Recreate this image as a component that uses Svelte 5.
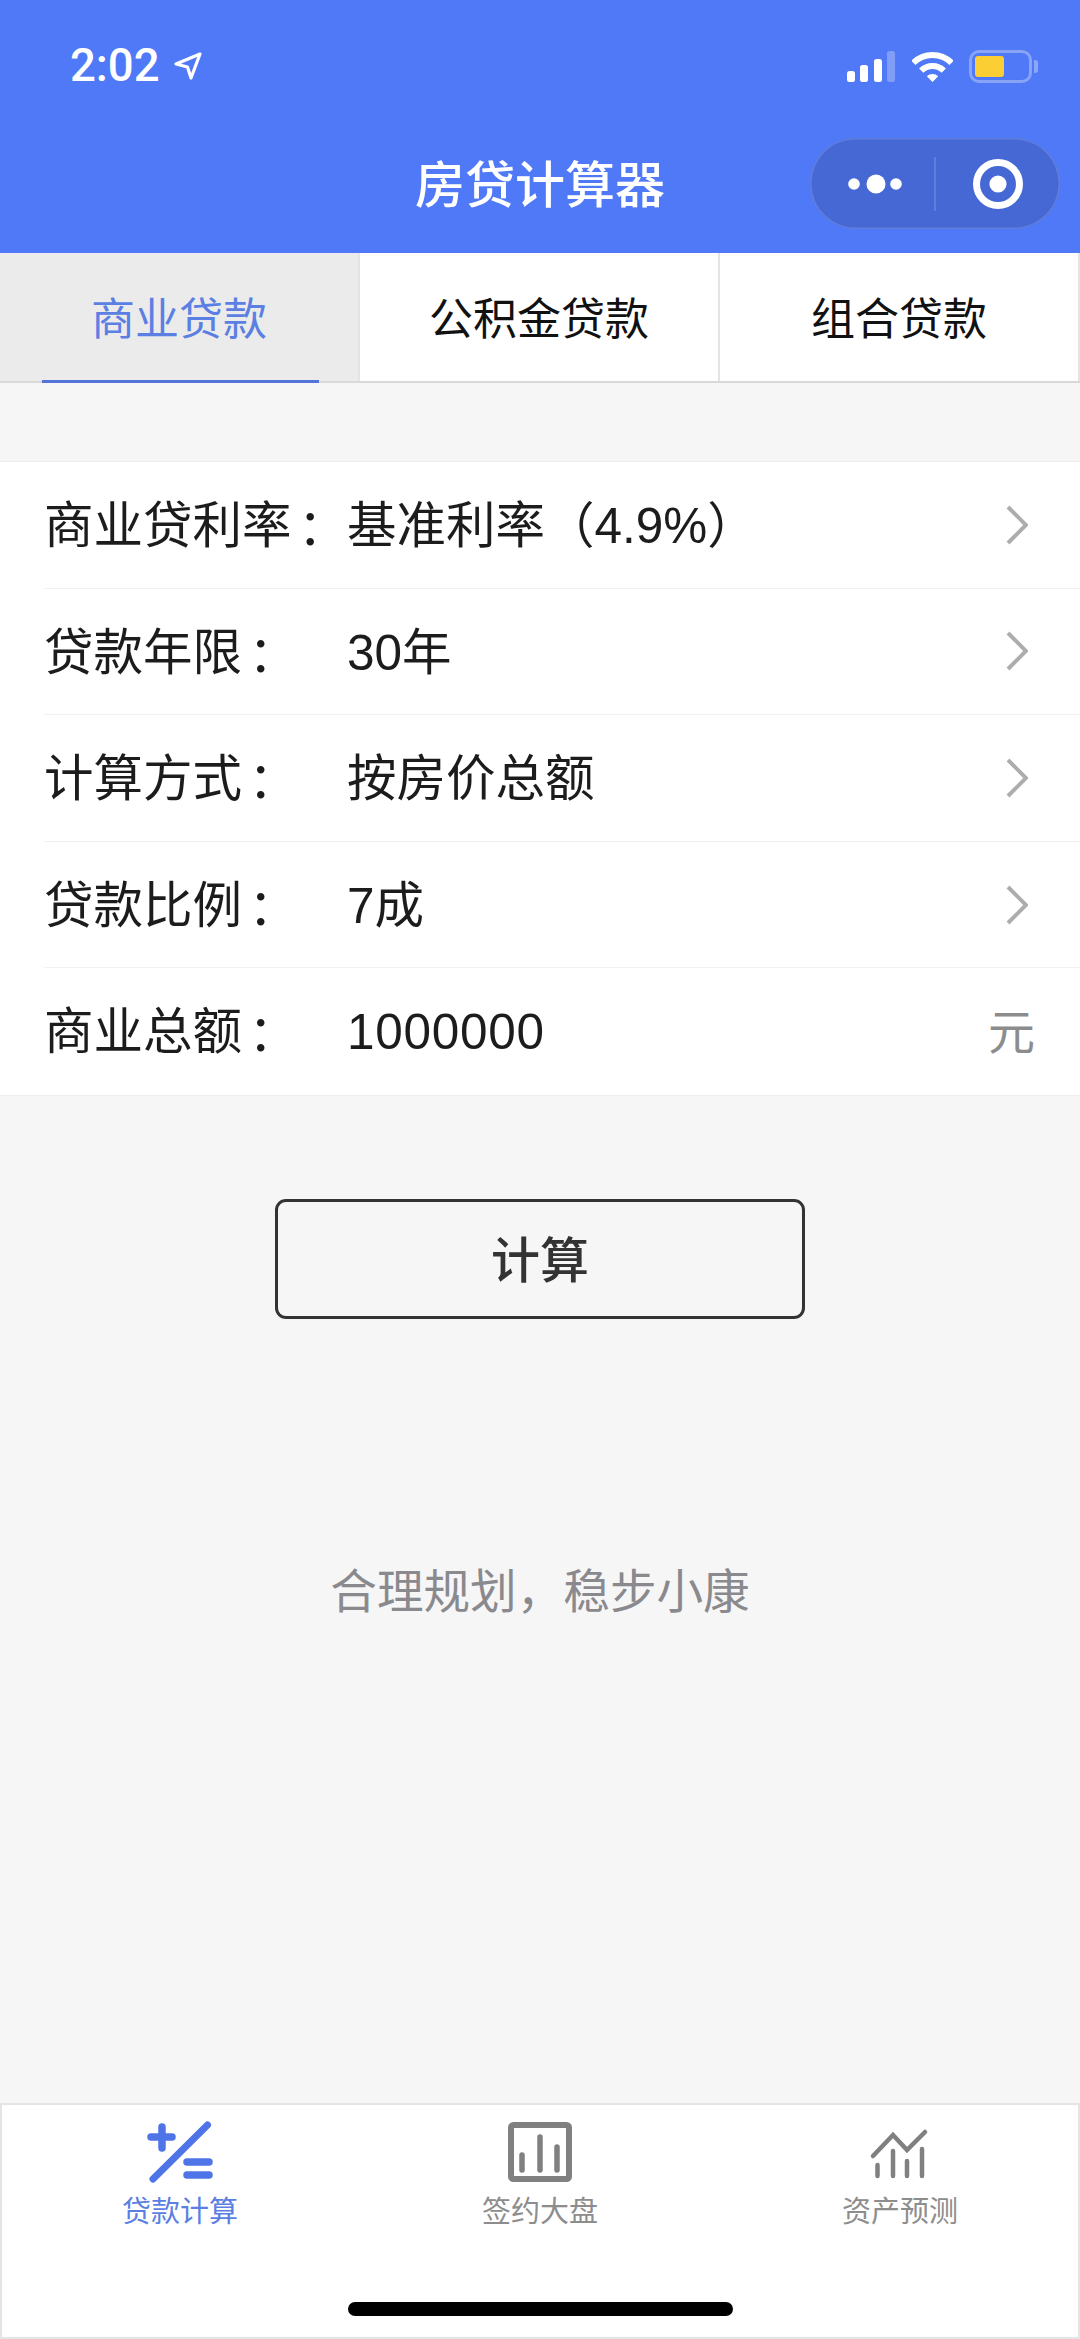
<script>
  const tabs = ['商业贷款', '公积金贷款', '组合贷款'];
  const rows = [
    { label: '商业贷利率', value: '基准利率（4.9%）', arrow: true },
    { label: '贷款年限', value: '30年', arrow: true },
    { label: '计算方式', value: '按房价总额', arrow: true },
    { label: '贷款比例', value: '7成', arrow: true },
    { label: '商业总额', value: '1000000', arrow: false }
  ];
</script>

<div class="page">
  <header class="header">
    <div class="status">
      <span class="time">2:02</span>
      <svg class="loc" width="30" height="30" viewBox="0 0 30 30" fill="none" stroke="#fff" stroke-width="3.2" stroke-linejoin="round" aria-hidden="true">
        <path d="M27 3 3 13l11.5 3L18 27z" />
      </svg>
      <span class="spacer"></span>
      <svg class="signal" width="48" height="31" viewBox="0 0 48 31" aria-hidden="true">
        <rect x="0" y="20" width="8" height="11" rx="2.5" fill="#fff" />
        <rect x="13" y="14" width="8" height="17" rx="2.5" fill="#fff" />
        <rect x="27" y="8" width="8" height="23" rx="2.5" fill="#fff" />
        <rect x="40" y="0" width="8" height="31" rx="2.5" fill="#fff" fill-opacity="0.28" />
      </svg>
      <svg class="wifi" width="41" height="32" viewBox="0 0 41 32" fill="none" stroke="#fff" stroke-width="6" aria-hidden="true">
        <path d="M1.4 12.9a27 27 0 0 1 38.2 0" />
        <path d="M9.2 20.7a16 16 0 0 1 22.6 0" />
        <path d="M14.8 26.3a8 8 0 0 1 11.4 0L20.5 32z" fill="#fff" stroke="none" />
      </svg>
      <div class="battery"><div class="level"></div></div>
      <span class="nub"></span>
    </div>
    <div class="nav">
      <h1 class="title">房贷计算器</h1>
      <div class="capsule">
        <svg width="250" height="91" viewBox="0 0 250 91" aria-hidden="true">
          <circle cx="44" cy="46" r="5.8" fill="#fff" />
          <circle cx="66" cy="46" r="9.5" fill="#fff" />
          <circle cx="86" cy="46" r="5.8" fill="#fff" />
          <line x1="125" y1="19" x2="125" y2="73" stroke="#fff" stroke-opacity="0.2" stroke-width="1.5" />
          <circle cx="188" cy="46" r="21.5" fill="none" stroke="#fff" stroke-width="7" />
          <circle cx="188" cy="46" r="8.6" fill="#fff" />
        </svg>
      </div>
    </div>
  </header>

  <nav class="tabs">
    {#each tabs as tab, i}
      <div class="tab" class:active={i === 0}>
        {tab}
        {#if i === 0}<span class="underline"></span>{/if}
      </div>
    {/each}
  </nav>

  <main class="main">
    <section class="list">
      {#each rows as row}
        <div class="row">
          <span class="label">{row.label}<span class="colon">：</span></span>
          <span class="value" class:num={!row.arrow}>{row.value}</span>
          {#if row.arrow}
            <svg class="chev" width="22" height="40" viewBox="0 0 22 40" fill="none" stroke="#adadad" stroke-width="4" aria-hidden="true">
              <path d="M2 2 20 20 2 38" />
            </svg>
          {:else}
            <span class="unit">元</span>
          {/if}
        </div>
      {/each}
    </section>

    <button class="calc" type="button"><span>计算</span></button>
    <p class="slogan">合理规划，稳步小康</p>
  </main>

  <footer class="tabbar">
    <div class="items">
      <div class="item on">
        <svg width="80" height="70" viewBox="0 0 80 70" fill="none" stroke="#4f74e8" stroke-linecap="round" aria-hidden="true">
          <path d="M11 19H32M22 9V30" stroke-width="7.5" />
          <path d="M13 61 67.5 7" stroke-width="7" />
          <path d="M47 44H69M47 57H69" stroke-width="7.5" />
        </svg>
        <span>贷款计算</span>
      </div>
      <div class="item">
        <svg width="80" height="70" viewBox="0 0 80 70" fill="none" stroke="#808080" aria-hidden="true">
          <rect x="11" y="7" width="58" height="54" rx="2.5" stroke-width="6" />
          <path d="M22 37V52M40 19V52M57 29V52" stroke-width="5.5" stroke-linecap="round" />
        </svg>
        <span>签约大盘</span>
      </div>
      <div class="item">
        <svg width="80" height="70" viewBox="0 0 80 70" fill="none" stroke="#808080" aria-hidden="true">
          <path d="M13 38 33 17 47 32 65 14" stroke-width="4.5" stroke-linecap="round" />
          <path d="M17.5 47V58M33 33V58M47 43V58M62 31V58" stroke-width="4.5" stroke-linecap="round" />
        </svg>
        <span>资产预测</span>
      </div>
    </div>
    <div class="home"></div>
  </footer>
</div>

<style>
  :global(body) {
    margin: 0;
    background: #f6f6f6;
  }

  .page {
    width: 1080px;
    height: 2339px;
    display: flex;
    flex-direction: column;
    overflow: hidden;
    font-family: "Liberation Sans", "Noto Sans CJK SC", sans-serif;
    color: #1c1c1c;
  }

  .header {
    height: 253px;
    flex: none;
    box-sizing: border-box;
    background: #4f79f6;
    padding-top: 46px;
  }

  .status {
    height: 40px;
    display: flex;
    align-items: center;
    padding: 0 42px 0 70px;
    color: #fff;
  }

  .time {
    font-family: Roboto, sans-serif;
    font-weight: 500;
    font-size: 45.5px;
    line-height: 40px;
  }

  .loc {
    margin-left: 13px;
  }

  .spacer {
    flex: 1;
  }

  .wifi {
    margin-left: 17px;
  }

  .battery {
    width: 63px;
    height: 33px;
    margin-left: 16px;
    box-sizing: border-box;
    border: 3px solid rgba(255, 255, 255, 0.32);
    border-radius: 10px;
    padding: 3px;
  }

  .level {
    width: 29px;
    height: 21px;
    background: #fbcf33;
    border-radius: 3px;
  }

  .nub {
    width: 4px;
    height: 13px;
    margin-left: 2px;
    background: rgba(255, 255, 255, 0.35);
    border-radius: 0 3px 3px 0;
  }

  .nav {
    margin-top: 52px;
    display: grid;
    grid-template-columns: 1fr auto 1fr;
    align-items: center;
    padding-right: 20px;
  }

  .title {
    grid-column: 2;
    margin: 5px 0 0 20px;
    font-size: 50px;
    font-weight: 500;
    line-height: 86px;
    color: #fff;
  }

  .capsule {
    grid-column: 3;
    justify-self: end;
    width: 250px;
    height: 91px;
    border-radius: 46px;
    background: #4668d4;
    box-shadow: inset 0 0 0 1.5px rgba(255, 255, 255, 0.14);
  }

  .capsule svg {
    display: block;
  }

  .tabs {
    flex: none;
    height: 130px;
    box-sizing: border-box;
    display: grid;
    grid-template-columns: repeat(3, 360px);
    background: #fff;
    border-bottom: 2px solid #d9d9d9;
  }

  .tab {
    position: relative;
    display: flex;
    align-items: center;
    justify-content: center;
    padding-bottom: 3px;
    font-size: 44px;
    color: #111;
    border-right: 2px solid #e4e4e4;
  }

  .tab.active {
    background: #ebebeb;
    color: #5b7fe2;
  }

  .underline {
    position: absolute;
    left: 42px;
    width: 277px;
    bottom: -2px;
    height: 3px;
    background: #5474da;
  }

  .main {
    flex: 1;
    display: flex;
    flex-direction: column;
    align-items: center;
    background: #f6f6f6;
    padding-top: 78px;
  }

  .list {
    width: 100%;
    background: #fff;
    border-top: 1px solid #eeeeee;
    border-bottom: 1px solid #eeeeee;
    padding-left: 44px;
    box-sizing: border-box;
  }

  .row {
    height: 126.6px;
    box-sizing: border-box;
    display: flex;
    align-items: baseline;
    padding-right: 46px;
    border-bottom: 1px solid #f1f1f1;
    font-size: 49.5px;
    line-height: 120px;
  }

  .row:last-child {
    border-bottom: 0;
  }

  .label {
    width: 303px;
    flex: none;
    white-space: nowrap;
  }

  .colon {
    font-family: "Noto Sans CJK TC", sans-serif;
    margin-left: -6px;
    position: relative;
    top: 5px;
  }

  .value {
    flex: 1;
    white-space: nowrap;
  }

  .value.num {
    letter-spacing: 0.7px;
  }

  .chev {
    align-self: center;
    margin-right: 6px;
  }

  .unit {
    color: #8c8c8c;
    font-size: 47px;
    margin-right: -1px;
  }

  .calc {
    margin-top: 103px;
    width: 530px;
    height: 120px;
    box-sizing: border-box;
    background: transparent;
    border: 3px solid #333;
    border-radius: 11px;
    font-family: inherit;
    font-size: 49px;
    font-weight: 500;
    color: #333;
    padding: 0 0 4px;
  }

  .slogan {
    margin: 236px 0 0;
    font-size: 46.6px;
    line-height: 74px;
    color: #8a8a8e;
  }

  .tabbar {
    flex: none;
    height: 236px;
    box-sizing: border-box;
    background: #fff;
    border: 2px solid #e4e4e4;
    padding-top: 13px;
  }

  .items {
    display: grid;
    grid-template-columns: repeat(3, 1fr);
    margin: 0 -2px;
  }

  .item {
    display: flex;
    flex-direction: column;
    align-items: center;
    font-size: 29px;
    line-height: 48px;
    color: #8d8d8d;
  }

  .item svg {
    display: block;
  }

  .item.on {
    color: #5b7fe2;
  }

  .home {
    width: 385px;
    height: 14px;
    margin: 66px auto 0;
    border-radius: 7px;
    background: #000;
  }
</style>
